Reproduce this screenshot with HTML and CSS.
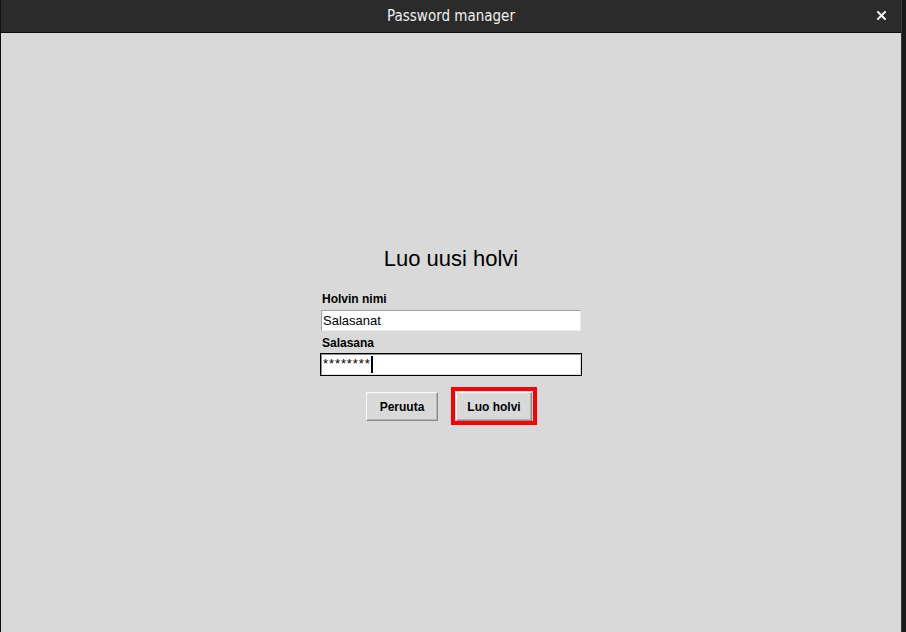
FILE: index.html
```html
<!DOCTYPE html>
<html lang="fi">
<head>
<meta charset="utf-8">
<title>Password manager</title>
<link rel="stylesheet" href="styles.css">
</head>
<body>
<div class="window">
  <header class="titlebar">
    <span class="title">Password manager</span>
    <button class="close" aria-label="Sulje">
      <svg width="9" height="9" viewBox="0 0 9 9"><path d="M1 1L8 8M8 1L1 8" stroke="#f2f2f2" stroke-width="2" stroke-linecap="square"/></svg>
    </button>
  </header>
  <main class="content">
    <div class="form">
      <h1 class="heading">Luo uusi holvi</h1>
      <label class="label">Holvin nimi</label>
      <div class="entry"><div class="field">Salasanat</div></div>
      <label class="label label-second">Salasana</label>
      <div class="entry focused"><div class="field"><span class="stars">********</span><span class="caret"></span></div></div>
      <div class="buttons">
        <button class="btn">Peruuta</button>
        <div class="highlight"><button class="btn btn-wide">Luo holvi</button></div>
      </div>
    </div>
  </main>
</div>
</body>
</html>
```
FILE: styles.css
```css
html, body {
  margin: 0;
  padding: 0;
  height: 100%;
  background: #1a1a1a;
}
body {
  font-family: "Liberation Sans", Arial, sans-serif;
  overflow: hidden;
}
.window {
  width: 900px;
  height: 632px;
  border-left: 1px solid #101010;
  border-right: 1px solid #3a3a3a;
  display: flex;
  flex-direction: column;
}
.titlebar {
  height: 32px;
  background: #2b2b2b;
  border-bottom: 1px solid #0c0c0c;
  display: flex;
  align-items: center;
  justify-content: center;
  position: relative;
}
.title {
  color: #f0f0f0;
  font-family: "DejaVu Sans Condensed", "DejaVu Sans", sans-serif;
  font-stretch: condensed;
  font-weight: normal;
  font-size: 15px;
  padding-top: 0;
}
.close {
  position: absolute;
  right: 14px;
  top: 10px;
  width: 11px;
  height: 11px;
  padding: 1px;
  border: 0;
  background: transparent;
  display: flex;
}
.content {
  flex: 1;
  background: #d9d9d9;
  display: flex;
  justify-content: center;
}
.form {
  width: 262px;
  padding-top: 213px;
  display: flex;
  flex-direction: column;
}
.heading {
  margin: 0 0 20px;
  font-weight: normal;
  font-size: 22px;
  line-height: 26px;
  text-align: center;
  color: #000;
}
.label {
  font-size: 12px;
  font-weight: bold;
  line-height: 15px;
  padding-left: 2px;
  margin-bottom: 2px;
  color: #000;
}
.label-second {
  margin-top: 4px;
  margin-bottom: 2px;
}
.entry {
  height: 23px;
  box-sizing: border-box;
  border: 1px solid transparent;
}
.entry.focused {
  border-color: #000;
}
.field {
  height: 21px;
  box-sizing: border-box;
  background: #fff;
  border: 1px solid;
  border-color: #a0a0a0 #ececec #ececec #a0a0a0;
  font-size: 13px;
  line-height: 19px;
  padding-left: 1px;
  color: #000;
  display: flex;
  align-items: center;
}
.focused .field {
  border-color: #8c8c8c #e0e0e0 #e0e0e0 #8c8c8c;
}
.stars {
  font-size: 13px;
  letter-spacing: 0.9px;
  line-height: 13px;
  align-self: flex-start;
  padding-top: 2px;
}
.caret {
  width: 2px;
  height: 17px;
  background: #000;
  margin-left: 0;
}
.buttons {
  margin-top: 11px;
  display: flex;
  justify-content: center;
  align-items: center;
  gap: 13px;
  padding-left: 1px;
}
.btn {
  height: 29px;
  width: 72px;
  box-sizing: border-box;
  background: #d9d9d9;
  border: 1px solid;
  border-color: #fafafa #8a8a8a #8a8a8a #fafafa;
  box-shadow: inset -1px -1px 0 #b4b4b4;
  font-family: "Liberation Sans", Arial, sans-serif;
  font-weight: bold;
  font-size: 12px;
  color: #000;
  padding: 0;
  margin-top: 1px;
}
.btn-wide {
  width: 76px;
  margin-top: 0;
  display: block;
}
.highlight {
  border: 4px solid #ff0000;
  padding: 1px 1px 0 1px;
  background: #d9d9d9;
}
```
